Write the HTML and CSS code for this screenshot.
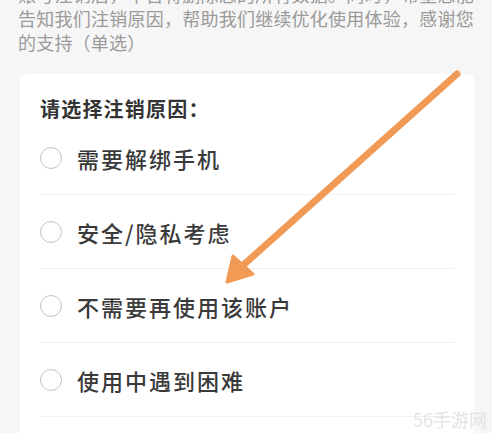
FILE: index.html
```html
<!DOCTYPE html>
<html lang="zh-CN">
<head>
    <meta charset="UTF-8">
    <meta name="viewport" content="width=device-width, initial-scale=1.0">
    <title>注销账号</title>
    <link rel="stylesheet" href="styles.css">
</head>
<body>
    <div class="page">
        <p class="notice">账号注销后，平台将删除您的所有数据。同时，希望您能告知我们注销原因，帮助我们继续优化使用体验，感谢您的支持（单选）</p>
        <div class="card">
            <h3 class="card-title">请选择注销原因：</h3>
            <label class="option"><span class="radio"></span><span class="option-text">需要解绑手机</span></label>
            <label class="option"><span class="radio"></span><span class="option-text">安全/隐私考虑</span></label>
            <label class="option"><span class="radio"></span><span class="option-text">不需要再使用该账户</span></label>
            <label class="option"><span class="radio"></span><span class="option-text">使用中遇到困难</span></label>
        </div>
        <svg class="arrow" width="492" height="433" viewBox="0 0 492 433">
            <line x1="457" y1="74" x2="240" y2="268" stroke="#f19a55" stroke-width="7" stroke-linecap="round"/>
            <polygon points="227,282 233,256 253,274" fill="#f19a55" stroke="#f19a55" stroke-width="3" stroke-linejoin="round"/>
        </svg>
        <div class="watermark">56手游网</div>
    </div>
</body>
</html>
```

FILE: styles.css
```css
body, html {
    margin: 0;
    padding: 0;
    background: #f6f6f6;
    font-family: "Noto Sans CJK SC", "Noto Sans", sans-serif;
    overflow: hidden;
}
.page {
    position: relative;
    width: 492px;
    height: 433px;
    overflow: hidden;
}
.notice {
    margin: -18px 0 0;
    padding: 0 18px;
    font-size: 18px;
    line-height: 24px;
    color: #9a9a9a;
    letter-spacing: 0.2px;
    text-align: justify;
}
.card {
    background: #fff;
    margin: 20px 18px 0 20px;
    padding: 21px 20px 40px;
    border-radius: 6px;
}
.card-title {
    margin: 0 0 -2px;
    font-size: 20px;
    line-height: 28px;
    letter-spacing: 1.2px;
    font-weight: 700;
    color: #333;
}
.option {
    display: flex;
    align-items: center;
    height: 73px;
    border-bottom: 1px solid #f0f0f0;
}
.radio {
    width: 20px;
    height: 20px;
    border: 1.5px solid #c4c4c4;
    border-radius: 50%;
    flex-shrink: 0;
}
.option-text {
    margin-left: 15px;
    font-size: 22px;
    font-weight: 500;
    letter-spacing: 2px;
    color: #3a3a3a;
}
.arrow {
    position: absolute;
    left: 0;
    top: 0;
}
.watermark {
    position: absolute;
    right: 5px;
    bottom: 1px;
    font-size: 18px;
    color: #e4e4e4;
}
```
